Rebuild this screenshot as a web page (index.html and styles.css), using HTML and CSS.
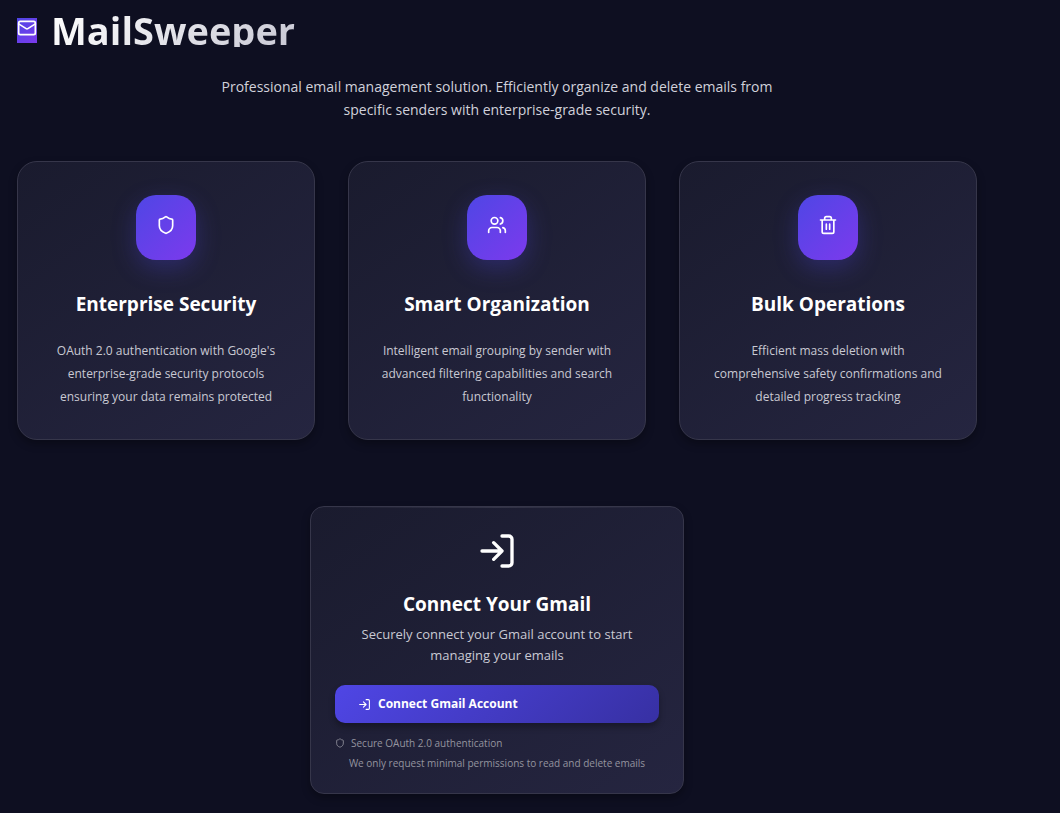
FILE: index.html
```html
<!DOCTYPE html>
<html lang="en">
<head>
<meta charset="utf-8">
<meta name="viewport" content="width=device-width, initial-scale=1">
<title>MailSweeper</title>
<link rel="stylesheet" href="styles.css">
</head>
<body>
<svg class="sprite" aria-hidden="true">
  <symbol id="shield" viewBox="0 0 24 24"><path d="M20 13c0 5-3.500 7.500-7.660 8.950a1 1 0 0 1-.67-.01C7.500 20.500 4 18 4 13V6a1 1 0 0 1 1-1c2 0 4.500-1.200 6.240-2.720a1.170 1.170 0 0 1 1.520 0C14.510 3.810 17 5 19 5a1 1 0 0 1 1 1z"/></symbol>
  <symbol id="login" viewBox="0 0 24 24"><path d="M15 3h4a2 2 0 0 1 2 2v14a2 2 0 0 1-2 2h-4M10 17l5-5-5-5M15 12H3"/></symbol>
</svg>
<main class="page">
  <header class="hero">
    <h1 class="brand">
      <span class="brand-mark"><svg class="icon brand-icon" viewBox="0 0 24 24" aria-hidden="true"><rect x="2" y="4" width="20" height="16" rx="2"/><path d="m22 7-8.970 5.700a1.940 1.940 0 0 1-2.060 0L2 7"/></svg></span>
      <span class="brand-name">MailSweeper</span>
    </h1>
    <p class="tagline">Professional email management solution. Efficiently organize and delete emails from specific senders with enterprise-grade security.</p>
  </header>

  <section class="features">
    <article class="feature">
      <span class="tile"><svg class="icon tile-icon" aria-hidden="true"><use href="#shield"/></svg></span>
      <h2 class="feature-title">Enterprise Security</h2>
      <p class="feature-text">OAuth 2.0 authentication with Google's enterprise-grade security protocols ensuring your data remains protected</p>
    </article>
    <article class="feature">
      <span class="tile"><svg class="icon tile-icon" viewBox="0 0 24 24" aria-hidden="true"><path d="M16 21v-2a4 4 0 0 0-4-4H6a4 4 0 0 0-4 4v2"/><circle cx="9" cy="7" r="4"/><path d="M22 21v-2a4 4 0 0 0-3-3.870M16 3.130a4 4 0 0 1 0 7.750"/></svg></span>
      <h2 class="feature-title">Smart Organization</h2>
      <p class="feature-text">Intelligent email grouping by sender with advanced filtering capabilities and search functionality</p>
    </article>
    <article class="feature">
      <span class="tile"><svg class="icon tile-icon" viewBox="0 0 24 24" aria-hidden="true"><path d="M3 6h18M19 6v14a2 2 0 0 1-2 2H7a2 2 0 0 1-2-2V6M8 6V4a2 2 0 0 1 2-2h4a2 2 0 0 1 2 2v2M10 11v6M14 11v6"/></svg></span>
      <h2 class="feature-title">Bulk Operations</h2>
      <p class="feature-text">Efficient mass deletion with comprehensive safety confirmations and detailed progress tracking</p>
    </article>
  </section>

  <section class="connect">
    <svg class="icon connect-icon" aria-hidden="true"><use href="#login"/></svg>
    <h2 class="connect-title">Connect Your Gmail</h2>
    <p class="connect-text">Securely connect your Gmail account to start managing your emails</p>
    <button class="connect-button" type="button"><svg class="icon button-icon" aria-hidden="true"><use href="#login"/></svg>Connect Gmail Account</button>
    <p class="note"><svg class="icon note-icon" aria-hidden="true"><use href="#shield"/></svg>Secure OAuth 2.0 authentication</p>
    <p class="note note-center">We only request minimal permissions to read and delete emails</p>
  </section>
</main>
</body>
</html>
```
FILE: styles.css
```css
* { box-sizing: border-box; }
body {
  margin: 0;
  min-height: 100vh;
  background: #0e0f21;
  color: #fff;
  font-family: "Segoe UI", "Open Sans", "Noto Sans", sans-serif;
}
h1, h2, p { margin: 0; }
.sprite { position: absolute; width: 0; height: 0; }
.icon {
  display: block;
  flex: none;
  fill: none;
  stroke: currentColor;
  stroke-width: 2;
  stroke-linecap: round;
  stroke-linejoin: round;
}
.page {
  max-width: 994px;
  padding: 8px 17px 19px;
  display: flex;
  flex-direction: column;
}
.hero { display: flex; flex-direction: column; }
.brand {
  display: flex;
  align-items: center;
  gap: 14px;
  min-height: 45px;
  font-size: 38px;
  line-height: 34px;
  font-weight: 700;
}
.brand-mark {
  width: 20px;
  height: 25px;
  background: linear-gradient(135deg, #4f46e5, #7c3aed);
}
.brand-icon { width: 20px; height: 20px; }
.brand-name {
  margin-bottom: 2px;
  background: linear-gradient(135deg, #fff, #c8c8d4);
  background-clip: text;
  -webkit-background-clip: text;
  color: transparent;
}
.tagline {
  align-self: center;
  max-width: 600px;
  margin-top: 22px;
  text-align: center;
  font-size: 14px;
  line-height: 23px;
  color: #d1d1db;
}
.features {
  display: grid;
  grid-template-columns: repeat(auto-fit, minmax(240px, 1fr));
  gap: 33px;
  margin-top: 40px;
}
.feature, .connect {
  border: 1px solid #36364a;
  background: linear-gradient(145deg, #1a1b2e, #252540);
  box-shadow: 0 4px 8px rgba(0, 0, 0, .3);
  display: flex;
  flex-direction: column;
}
.feature {
  align-items: center;
  padding: 33px 32px 31px;
  border-radius: 20px;
  text-align: center;
}
.tile {
  width: 60px;
  height: 65px;
  padding: 20px;
  border-radius: 20px;
  background: linear-gradient(135deg, #4f46e5, #7c3aed);
  box-shadow: 0 8px 24px rgba(79, 70, 229, .3);
}
.tile-icon { width: 20px; height: 20px; }
.feature-title {
  margin-top: 30px;
  font-size: 19px;
  line-height: 28px;
  font-weight: 700;
}
.feature-text {
  margin-top: 21px;
  font-size: 12px;
  line-height: 23px;
  color: #c9c9d3;
}
.connect {
  position: relative;
  align-self: center;
  width: 100%;
  max-width: 374px;
  margin-top: 66px;
  padding: 24px 24px 20px;
  border-radius: 14px;
}
.connect::before {
  content: "";
  position: absolute;
  top: 0;
  left: 0;
  right: 0;
  height: 1px;
  background: linear-gradient(90deg, transparent, rgba(255, 255, 255, .1), transparent);
}
.connect-icon { align-self: center; width: 40px; height: 40px; }
.connect-title {
  margin-top: 19px;
  text-align: center;
  font-size: 19px;
  line-height: 28px;
}
.connect-text {
  padding: 0 24px;
  margin-top: 6px;
  text-align: center;
  font-size: 13px;
  line-height: 21px;
  color: #c9c9d3;
}
.connect-button {
  display: flex;
  align-items: center;
  gap: 7px;
  height: 38px;
  margin-top: 19px;
  padding: 0 23px;
  border: 0;
  border-radius: 10px;
  background: linear-gradient(135deg, #4f46e5, #3730a3);
  box-shadow: 0 4px 6px rgba(0, 0, 0, .3);
  color: #fff;
  font: 700 12px/20px "Segoe UI", "Open Sans", "Noto Sans", sans-serif;
  cursor: pointer;
}
.button-icon { width: 13px; height: 13px; }
.note {
  display: flex;
  align-items: center;
  gap: 6px;
  font-size: 10px;
  line-height: 20px;
  color: #94949f;
}
.connect-button + .note { margin-top: 10px; }
.note-icon { width: 10px; height: 10px; }
.note-center { justify-content: center; }
```
